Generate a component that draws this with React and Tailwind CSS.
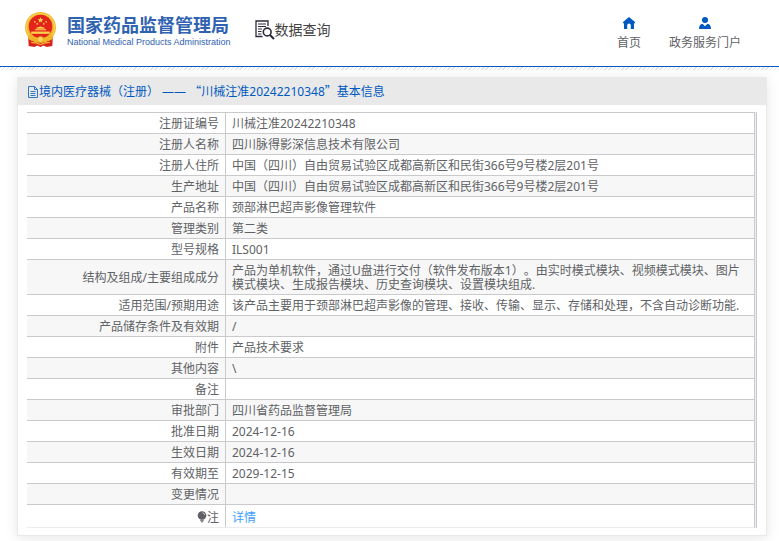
const rows = [
  { label: "注册证编号", value: "川械注准20242210348" },
  { label: "注册人名称", value: "四川脉得影深信息技术有限公司" },
  { label: "注册人住所", value: "中国（四川）自由贸易试验区成都高新区和民街366号9号楼2层201号" },
  { label: "生产地址", value: "中国（四川）自由贸易试验区成都高新区和民街366号9号楼2层201号" },
  { label: "产品名称", value: "颈部淋巴超声影像管理软件" },
  { label: "管理类别", value: "第二类" },
  { label: "型号规格", value: "ILS001" },
  {
    label: "结构及组成/主要组成成分",
    value:
      "产品为单机软件，通过U盘进行交付（软件发布版本1）。由实时模式模块、视频模式模块、图片模式模块、生成报告模块、历史查询模块、设置模块组成.",
  },
  {
    label: "适用范围/预期用途",
    value: "该产品主要用于颈部淋巴超声影像的管理、接收、传输、显示、存储和处理，不含自动诊断功能.",
  },
  { label: "产品储存条件及有效期", value: "/" },
  { label: "附件", value: "产品技术要求" },
  { label: "其他内容", value: "\\" },
  { label: "备注", value: "" },
  { label: "审批部门", value: "四川省药品监督管理局" },
  { label: "批准日期", value: "2024-12-16" },
  { label: "生效日期", value: "2024-12-16" },
  { label: "有效期至", value: "2029-12-15" },
  { label: "变更情况", value: "" },
];

const Emblem = () => (
  <svg viewBox="0 0 32 34" className="h-[35px] w-[33px]" aria-hidden="true">
    <path d="M4 24 L28 24 L27.500 33 L22 34 L19 32.500 L16 34 L13 32.500 L10 34 L4.500 33 Z" fill="#d9231c" />
    <circle cx="16" cy="15" r="15" fill="#f0b429" />
    <circle cx="16" cy="15" r="13.6" fill="none" stroke="#f9d65a" strokeWidth="1" />
    <circle cx="16" cy="14" r="11.4" fill="#e3241b" />
    <path d="M16 5l.8 1.800 1.900.200-1.400 1.300.400 1.900-1.700-1-1.700 1 .400-1.900-1.400-1.300 1.900-.200z" fill="#fbd34d" />
    <g fill="#fbd34d">
      <circle cx="10.500" cy="9.600" r="0.8" />
      <circle cx="21.500" cy="9.600" r="0.8" />
      <circle cx="12.8" cy="11.600" r="0.8" />
      <circle cx="19.2" cy="11.600" r="0.8" />
      <path d="M12 15.200l4-1.200 4 1.200v1h-8z" />
      <path d="M10.500 16.800h11v1h-11z" />
      <path d="M7 19h18v2.200H7z" />
    </g>
    <path d="M4.500 22c3 4 20 4 23 0l.5 4c-4 4-20 4-24 0z" fill="#f0b429" />
    <circle cx="16" cy="26.500" r="2.800" fill="#f9d65a" stroke="#d9a01c" strokeWidth="0.6" />
    <path d="M7 29.500c3 0 5.500.500 9 2 3.500-1.500 6-2 9-2" fill="none" stroke="#f5b93a" strokeWidth="1" />
  </svg>
);

const SearchDocIcon = () => (
  <svg viewBox="0 0 20 20" className="size-5" fill="none" stroke="#2c2b3c" aria-hidden="true">
    <path d="M13 6V1H1v15.500h6.500" strokeWidth="1.300" />
    <path d="M3 4h8M3 6.500h8M3 9h4M3 11.500h3.500M3 14h3.500" strokeWidth="1" />
    <circle cx="12.200" cy="12" r="3.900" strokeWidth="1.600" />
    <path d="M15 15l4 4" strokeWidth="2.200" />
  </svg>
);

const HomeIcon = () => (
  <svg viewBox="0 0 12 12" className="size-3" fill="#0059c1" aria-hidden="true">
    <path d="M6 0L0 5v1.200h1V12h3.200V8.200a1.800 1.800 0 0 1 3.600 0V12H11V6.200h1V5z" />
  </svg>
);

const UserIcon = () => (
  <svg viewBox="0 0 12 12" className="size-3" fill="#0059c1" aria-hidden="true">
    <circle cx="6" cy="3" r="3" />
    <path d="M0 12c0-3.200 1.300-5 3.500-5.300L6 9.200l2.500-2.500C10.700 7 12 8.800 12 12z" />
  </svg>
);

const DocIcon = () => (
  <svg viewBox="0 0 10 12" className="h-3 w-[10px] shrink-0" fill="none" stroke="#0059c1" aria-hidden="true">
    <path d="M.500.500h6l3 3v8h-9zM6.500.500v3h3M2.500 5.500h5M2.500 7.500h5M2.500 9.500h5" strokeWidth="0.800" />
  </svg>
);

const BulbIcon = () => (
  <svg viewBox="0 0 10 12" className="inline-block h-3 w-[10px] align-[-1px]" aria-hidden="true">
    <circle cx="5" cy="4.500" r="4.300" fill="#606266" />
    <path d="M3.200 9.200h3.600M3.800 10.800h2.400" stroke="#606266" strokeWidth="1.100" />
    <path d="M5.500 1.800c1.200.200 1.900 1 2.100 2.200" fill="none" stroke="#fff" strokeWidth="0.700" />
  </svg>
);

const Header = () => (
  <header>
    <div className="flex h-[67px] items-start border-b border-[#0059c1] bg-white pl-6 pr-[38px]">
      <a href="#" className="mt-3 flex items-start gap-[10px] text-[#2f62b0]">
        <Emblem />
        <span className="mt-[3px] block">
          <span className="block whitespace-nowrap text-[18px] font-bold leading-5">国家药品监督管理局</span>
          <span className="mt-px block whitespace-nowrap font-['Liberation_Sans',sans-serif] text-[9px] leading-3">
            National Medical Products Administration
          </span>
        </span>
      </a>
      <div className="ml-6 mt-5 flex items-center text-[#444]">
        <SearchDocIcon />
        <span className="text-[14px] leading-5">数据查询</span>
      </div>
      <nav className="ml-auto mt-[17px] flex gap-7 text-xs text-[#606266]">
        <a href="#" className="flex flex-col items-center gap-[6px]">
          <HomeIcon />
          <span>首页</span>
        </a>
        <a href="#" className="flex flex-col items-center gap-[6px]">
          <UserIcon />
          <span>政务服务门户</span>
        </a>
      </nav>
    </div>
    <div className="h-[3px] bg-[repeating-linear-gradient(135deg,#e2e2e2_0px,#e2e2e2_1px,#ffffff_1px,#ffffff_3px)]" />
  </header>
);

export default function App() {
  return (
    <div
      lang="zh-CN"
      className="min-h-screen bg-white pb-1 font-['Noto_Sans','Noto_Sans_CJK_SC',sans-serif] text-xs text-[#606266] [text-spacing-trim:space-all]"
    >
      <Header />
      <main className="ml-[17px] mr-3 mt-[7px] border border-[#e9e9e9] bg-white shadow-[0_2px_12px_rgba(0,0,0,0.1)]">
        <h1 className="flex h-[27px] items-center bg-[#e9e9e9] pl-[10px] text-[#0059c1]">
          <DocIcon />
          <span className="ml-px">
            境内医疗器械（注册） —— <span className="font-['Noto_Sans_CJK_SC',sans-serif]">“</span>
            川械注准20242210348<span className="font-['Noto_Sans_CJK_SC',sans-serif]">”</span>基本信息
          </span>
        </h1>
        <div className="mx-[9px] mb-[7px] mt-[7px] border-r border-[#cacacd] bg-[#ebeef5] pr-px">
          <table className="w-full border-separate border-spacing-0 border-b border-r border-b-[#ebebeb] border-r-[#cacacd] bg-white leading-[14px]">
            <tbody>
              {rows.map((row) => (
                <tr key={row.label} className="even:bg-[#f7f7f7]">
                  <th
                    scope="row"
                    className="h-[21px] w-[199px] border-r border-t border-[#cacacd] px-[6px] pb-[2px] pt-1 text-right font-normal"
                  >
                    {row.label}
                  </th>
                  <td className="border-t border-[#cacacd] px-[6px] pb-[2px] pt-1">{row.value}</td>
                </tr>
              ))}
              <tr>
                <th scope="row" className="border-r border-t border-[#cacacd] px-[6px] pb-[2px] pt-[6px] text-right font-normal">
                  <BulbIcon />注
                </th>
                <td className="border-t border-[#cacacd] px-[6px] pb-[2px] pt-[6px]">
                  <a href="#" className="text-[#409eff]">
                    详情
                  </a>
                </td>
              </tr>
            </tbody>
          </table>
        </div>
      </main>
    </div>
  );
}
